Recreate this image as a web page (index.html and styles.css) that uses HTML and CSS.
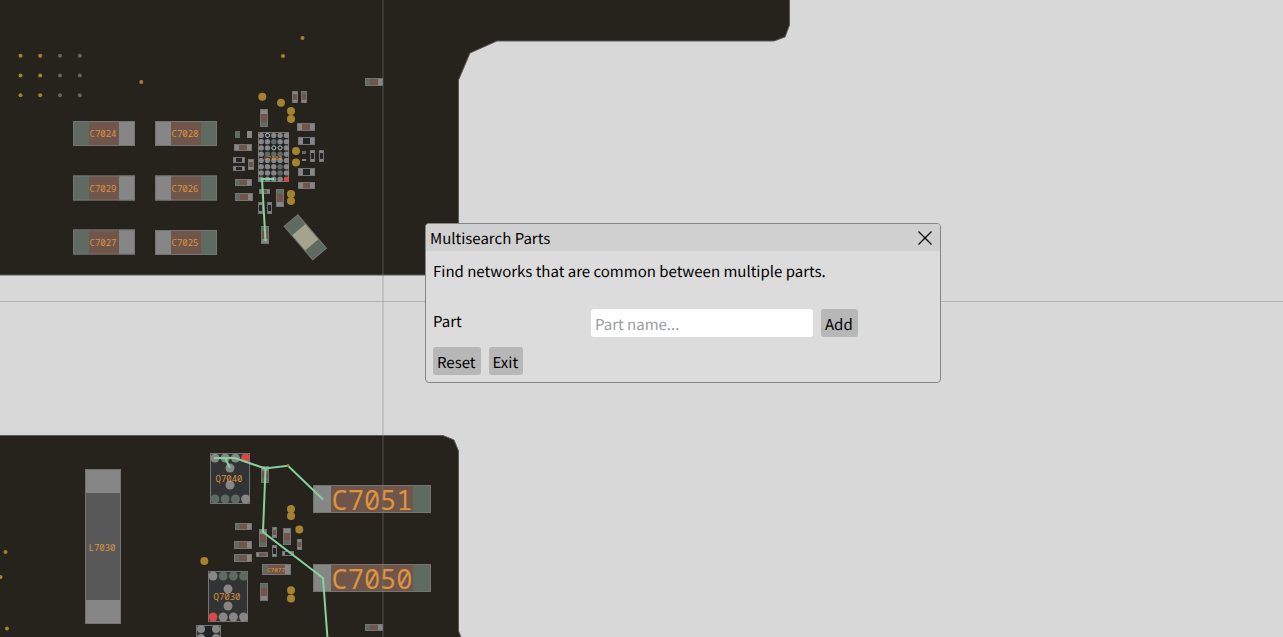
FILE: index.html
```
<!DOCTYPE html>
<html lang="en">
<head>
  <meta charset="UTF-8" />
  <title>Board Viewer</title>
  <link rel="stylesheet" href="styles.css">
</head>
<body>

  <!-- Board canvas, filled in by board.js -->
  <svg class="board" id="board" role="img" aria-label="Circuit board">
    <path class="outline" d="M-2 -2H789.500V25L785 37L774 41H497L470 53L458.500 80V275H-2Z" />
    <path class="outline" d="M-2 435.500H443L454 440L458.500 451V631L464 645H-2Z" />
    <g id="parts"></g>
    <g id="vias"></g>

    <!-- Rotated part next to the BGA -->
    <g transform="translate(305.3 237.3) rotate(49.6)">
      <rect class="green" x="-22" y="-9" width="44" height="18" />
      <rect class="cream" x="-10" y="-9" width="20" height="18" />
      <rect class="rim" x="-22" y="-9" width="44" height="18" />
    </g>

    <g id="labels"></g>

    <!-- Net connections -->
    <path class="net" d="M274 179H262L265.5 241" />
    <path class="net" d="M214 458H235L265 468.500L288 465.700L323 499.500" />
    <path class="net" d="M225 458L230 468" />
    <path class="net" d="M265.500 468.500L263 532L323 578L328 645" />
    <circle class="gold" cx="288" cy="465.500" r="1.500" />

    <!-- Crosshair -->
    <line class="cross cross-v" x1="383" y1="0" x2="383" y2="100%" />
    <line class="cross" x1="0" y1="301.500" x2="100%" y2="301.500" />
  </svg>

  <!-- Multisearch window -->
  <section class="dialog" role="dialog" aria-labelledby="dialogTitle">
    <header class="dialog-header">
      <span id="dialogTitle">Multisearch Parts</span>
      <button class="close" aria-label="Close">
        <svg width="14" height="14" viewBox="0 0 14 14"><path d="M0.500 0.500L13.500 13.500M13.500 0.500L0.500 13.500" /></svg>
      </button>
    </header>
    <div class="dialog-body">
      <p>Find networks that are common between multiple parts.</p>
      <div class="row">
        <label for="partName">Part</label>
        <input type="text" id="partName" placeholder="Part name..." />
        <button class="btn">Add</button>
      </div>
      <div class="actions">
        <button class="btn">Reset</button>
        <button class="btn">Exit</button>
      </div>
    </div>
  </section>

  <script src="board.js"></script>
</body>
</html>
```
FILE: styles.css
```
body {
  margin: 0;
  height: 100vh;
  overflow: hidden;
  background-color: #d8d8d8;
  font-family: "Noto Sans CJK SC", sans-serif;
  font-size: 15px;
  line-height: 20px;
  text-rendering: geometricPrecision;
  color: #000;
}

/* Board */
.board {
  display: block;
  width: 100%;
  height: 100%;
}

.outline {
  fill: #26221c;
  stroke: #555c56;
}

.grey { fill: #868686; }
.green { fill: #5f6b60; }
.brown { fill: #70554a; }
.dark { fill: #222326; }
.steel { fill: #585858; }
.cream { fill: #a5a38e; }
.chip { fill: #323335; }
.gold { fill: #a58230; }
.red { fill: #d34a48; }

.rim {
  fill: none;
  stroke: #747474;
}

.hole {
  fill: #222326;
  stroke: #c8c8c8;
  stroke-width: 1;
}

.net {
  fill: none;
  stroke: #84d29c;
  stroke-width: 2;
}

.cross {
  stroke: #808080;
  stroke-opacity: 0.4;
}

.cross-v {
  stroke-width: 2;
  stroke-opacity: 0.25;
}

.label {
  fill: #dc9440;
  font-family: "Noto Sans Mono", "DejaVu Sans Mono", monospace;
  font-size: 9px;
  text-anchor: middle;
  text-rendering: auto;
}

.label-big { font-size: 27px; }
.label-small { font-size: 6px; }

/* Dialog */
.dialog {
  position: absolute;
  top: 223px;
  left: 425px;
  box-sizing: border-box;
  width: 516px;
  border: 1px solid #858585;
  border-radius: 4px;
  background-color: #dcdcdc;
  overflow: hidden;
}

.dialog-header {
  display: flex;
  justify-content: space-between;
  height: 27px;
  padding: 0 8px 0 4px;
  line-height: 30px;
  background-color: #d0d0d0;
}

.close {
  display: flex;
  align-items: center;
  padding: 0;
  border: none;
  background: none;
  cursor: pointer;
}

.close path {
  stroke: #000;
  stroke-width: 1.3;
}

.dialog-body {
  padding: 11px 7px 7px;
}

.dialog-body p {
  margin: 0 0 27px;
}

.row {
  display: flex;
  gap: 8px;
}

.row label {
  width: 150px;
  padding-top: 3px;
}

.row input {
  box-sizing: border-box;
  width: 222px;
  height: 28px;
  padding: 2px 4px 0;
  border: none;
  border-radius: 3px;
  background-color: #fff;
  font: inherit;
  text-rendering: inherit;
}

.row input::placeholder {
  color: #9d9d9d;
}

.btn {
  height: 28px;
  padding: 4px 5px 0 4px;
  border: none;
  border-radius: 3px;
  background-color: #b7b7b7;
  color: #000;
  font: inherit;
  text-rendering: inherit;
  cursor: pointer;
}

.actions {
  display: flex;
  gap: 8px;
  margin-top: 10px;
}
```
FILE: board.js
```
const partsLayer = document.getElementById("parts");
const viasLayer = document.getElementById("vias");
const labelsLayer = document.getElementById("labels");

function draw(layer, tag, attrs) {
  const el = document.createElementNS("http://www.w3.org/2000/svg", tag);
  for (const key in attrs) el.setAttribute(key, attrs[key]);
  layer.appendChild(el);
  return el;
}

function box(x, y, width, height, cls) {
  draw(partsLayer, "rect", { x, y, width, height, class: cls });
}

function dot(cx, cy, r, cls) {
  draw(viasLayer, "circle", { cx, cy, r, class: cls });
}

function label(x, y, text, size) {
  draw(labelsLayer, "text", { x, y, class: "label " + (size || "") }).textContent = text;
}

// Two-pad part: the pads sit at the ends of the longer side
function part(x, y, w, h, pad, first, body, last) {
  if (w > h) {
    box(x, y, pad, h, first);
    box(x + w - pad, y, pad, h, last);
    box(x + pad, y, w - pad * 2, h, body);
  } else {
    box(x, y, w, pad, first);
    box(x, y + h - pad, w, pad, last);
    box(x, y + pad, w, h - pad * 2, body);
  }
  box(x + 0.5, y + 0.5, w - 1, h - 1, "rim");
}

// Large capacitors
[["C7024", 73, 121], ["C7029", 73, 175.5], ["C7027", 73, 229.5]].forEach(([name, x, y]) => {
  part(x, y, 62, 25, 16, "green", "brown", "grey");
  label(x + 30, y + 16, name);
});
[["C7028", 155, 121], ["C7026", 155, 175.5], ["C7025", 155, 230]].forEach(([name, x, y]) => {
  part(x, y, 62, 25, 16, "grey", "brown", "green");
  label(x + 30, y + 16, name);
});
[["C7051", 313, 485], ["C7050", 313, 564]].forEach(([name, x, y]) => {
  part(x, y, 118, 28, 18, "grey", "brown", "green");
  label(x + 59, y + 25, name, "label-big");
});
part(85, 469, 36, 155, 24, "grey", "steel", "grey");
label(102, 551, "L7030");
part(262, 564, 29, 11, 6, "green", "brown", "grey");
label(276, 572, "C7077", "label-small");

// Small parts: x, y, w, h, first pad, body, last pad
[
  [292, 91, 6, 12, "grey", "brown", "grey"],
  [301, 91, 6, 12, "green", "brown", "grey"],
  [260, 109, 8, 18, "grey", "brown", "green"],
  [297, 123, 18, 8, "grey", "brown", "grey"],
  [298, 137, 17, 8, "grey", "dark", "grey"],
  [234, 144, 18, 7, "grey", "brown", "grey"],
  [233, 157, 12, 6, "grey", "dark", "grey"],
  [233, 166, 12, 5, "grey", "dark", "grey"],
  [248, 159, 6, 11, "grey", "brown", "grey"],
  [310, 150, 5, 12, "grey", "dark", "grey"],
  [319, 150, 5, 12, "grey", "dark", "grey"],
  [298, 168, 17, 8, "grey", "dark", "grey"],
  [298, 182, 17, 7, "grey", "brown", "grey"],
  [235, 179, 17, 7, "green", "brown", "grey"],
  [235, 193, 18, 8, "green", "brown", "grey"],
  [259, 189, 11, 5, "grey", "brown", "grey"],
  [276, 189, 8, 18, "green", "brown", "grey"],
  [258, 202, 5, 12, "grey", "dark", "grey"],
  [267, 202, 5, 12, "grey", "dark", "grey"],
  [261, 226, 8, 18, "green", "brown", "grey"],
  [365, 78, 18, 8, "green", "brown", "grey"],
  [261, 466, 8, 17, "grey", "brown", "green"],
  [235, 523, 17, 7, "green", "brown", "grey"],
  [259, 529, 8, 18, "grey", "brown", "green"],
  [272, 527, 5, 11, "grey", "brown", "grey"],
  [283, 528, 8, 17, "grey", "brown", "green"],
  [297, 539, 5, 11, "grey", "brown", "grey"],
  [234, 541, 18, 8, "green", "brown", "grey"],
  [234, 554, 18, 8, "green", "brown", "grey"],
  [256, 552, 12, 5, "grey", "brown", "green"],
  [272, 545, 5, 12, "grey", "dark", "grey"],
  [282, 551, 12, 5, "grey", "dark", "grey"],
  [260, 583, 8, 18, "green", "brown", "grey"],
  [365, 624, 18, 7, "green", "brown", "grey"]
].forEach(([x, y, w, h, first, body, last]) => {
  const pad = Math.max(w, h) > 14 ? 5 : 3;
  part(x, y, w, h, pad, first, body, last);
});

// Bare pads
box(235, 131, 5, 7, "green");
box(247, 131, 5, 7, "grey");
box(302, 151, 4, 3, "green");
box(302, 159, 4, 2, "grey");

// BGA, one letter for each ball
box(258, 132, 31, 50, "dark");
box(258.5, 132.5, 30, 49, "rim");
const balls = { g: "grey", n: "green", r: "red", o: "hole" };
["goggg", "ggngg", "ggoog", "gnnng", "ggggg", "gggng", "gggng", "ggggr"].forEach((row, r) => {
  row.split("").forEach((ball, c) => {
    dot(261.2 + c * 6.3, 135.4 + r * 6.25, ball === "o" ? 2 : 2.7, balls[ball]);
  });
});
label(273, 160, "U7000", "label-small");

// Transistor packages, mid is the offset of the first centre pad
function transistor(x, y, name, mid, top, bottom) {
  box(x, y, 40, 51, "chip");
  box(x + 0.5, y + 0.5, 39, 50, "rim");
  for (let i = 0; i < 4; i++) {
    dot(x + 5 + i * 10.2, y + 5, 4.5, balls[top[i]]);
    dot(x + 5 + i * 10.2, y + 46, 4.5, balls[bottom[i]]);
  }
  dot(x + 20, y + mid, 4.5, "grey");
  dot(x + 20, y + mid + 17, 4.5, "grey");
  label(x + 19, y + 29, name);
}
transistor(210, 453, "Q7040", 15, "gggr", "nnng");
transistor(208, 571, "Q7030", 18, "gnnn", "rggg");

box(196, 625, 25, 20, "chip");
box(203, 626, 11, 18, "dark");
box(196.5, 625.5, 24, 20, "rim");
[[201, 629], [216, 629], [201, 638], [216, 638]].forEach(([x, y]) => dot(x, y, 4, "grey"));

// Test points and vias
[
  [262.3, 96.7], [281, 102.7], [291, 111], [291, 119], [296, 151], [296, 162.5],
  [291, 194], [291, 201], [291, 509], [291, 516], [299.3, 529.5], [204.3, 561],
  [291, 590.3], [291, 598.5]
].forEach(([x, y]) => dot(x, y, 4, "gold"));

[55.7, 75.4, 95.2].forEach(y => {
  dot(20.5, y, 2, "gold");
  dot(40.2, y, 2, "gold");
  dot(60, y, 2, "green");
  dot(79.8, y, 2, "green");
});
[[141.3, 82], [283, 56], [302.5, 38], [5.5, 552], [0.5, 577], [7, 628.5]]
  .forEach(([x, y]) => dot(x, y, 2, "gold"));
```
